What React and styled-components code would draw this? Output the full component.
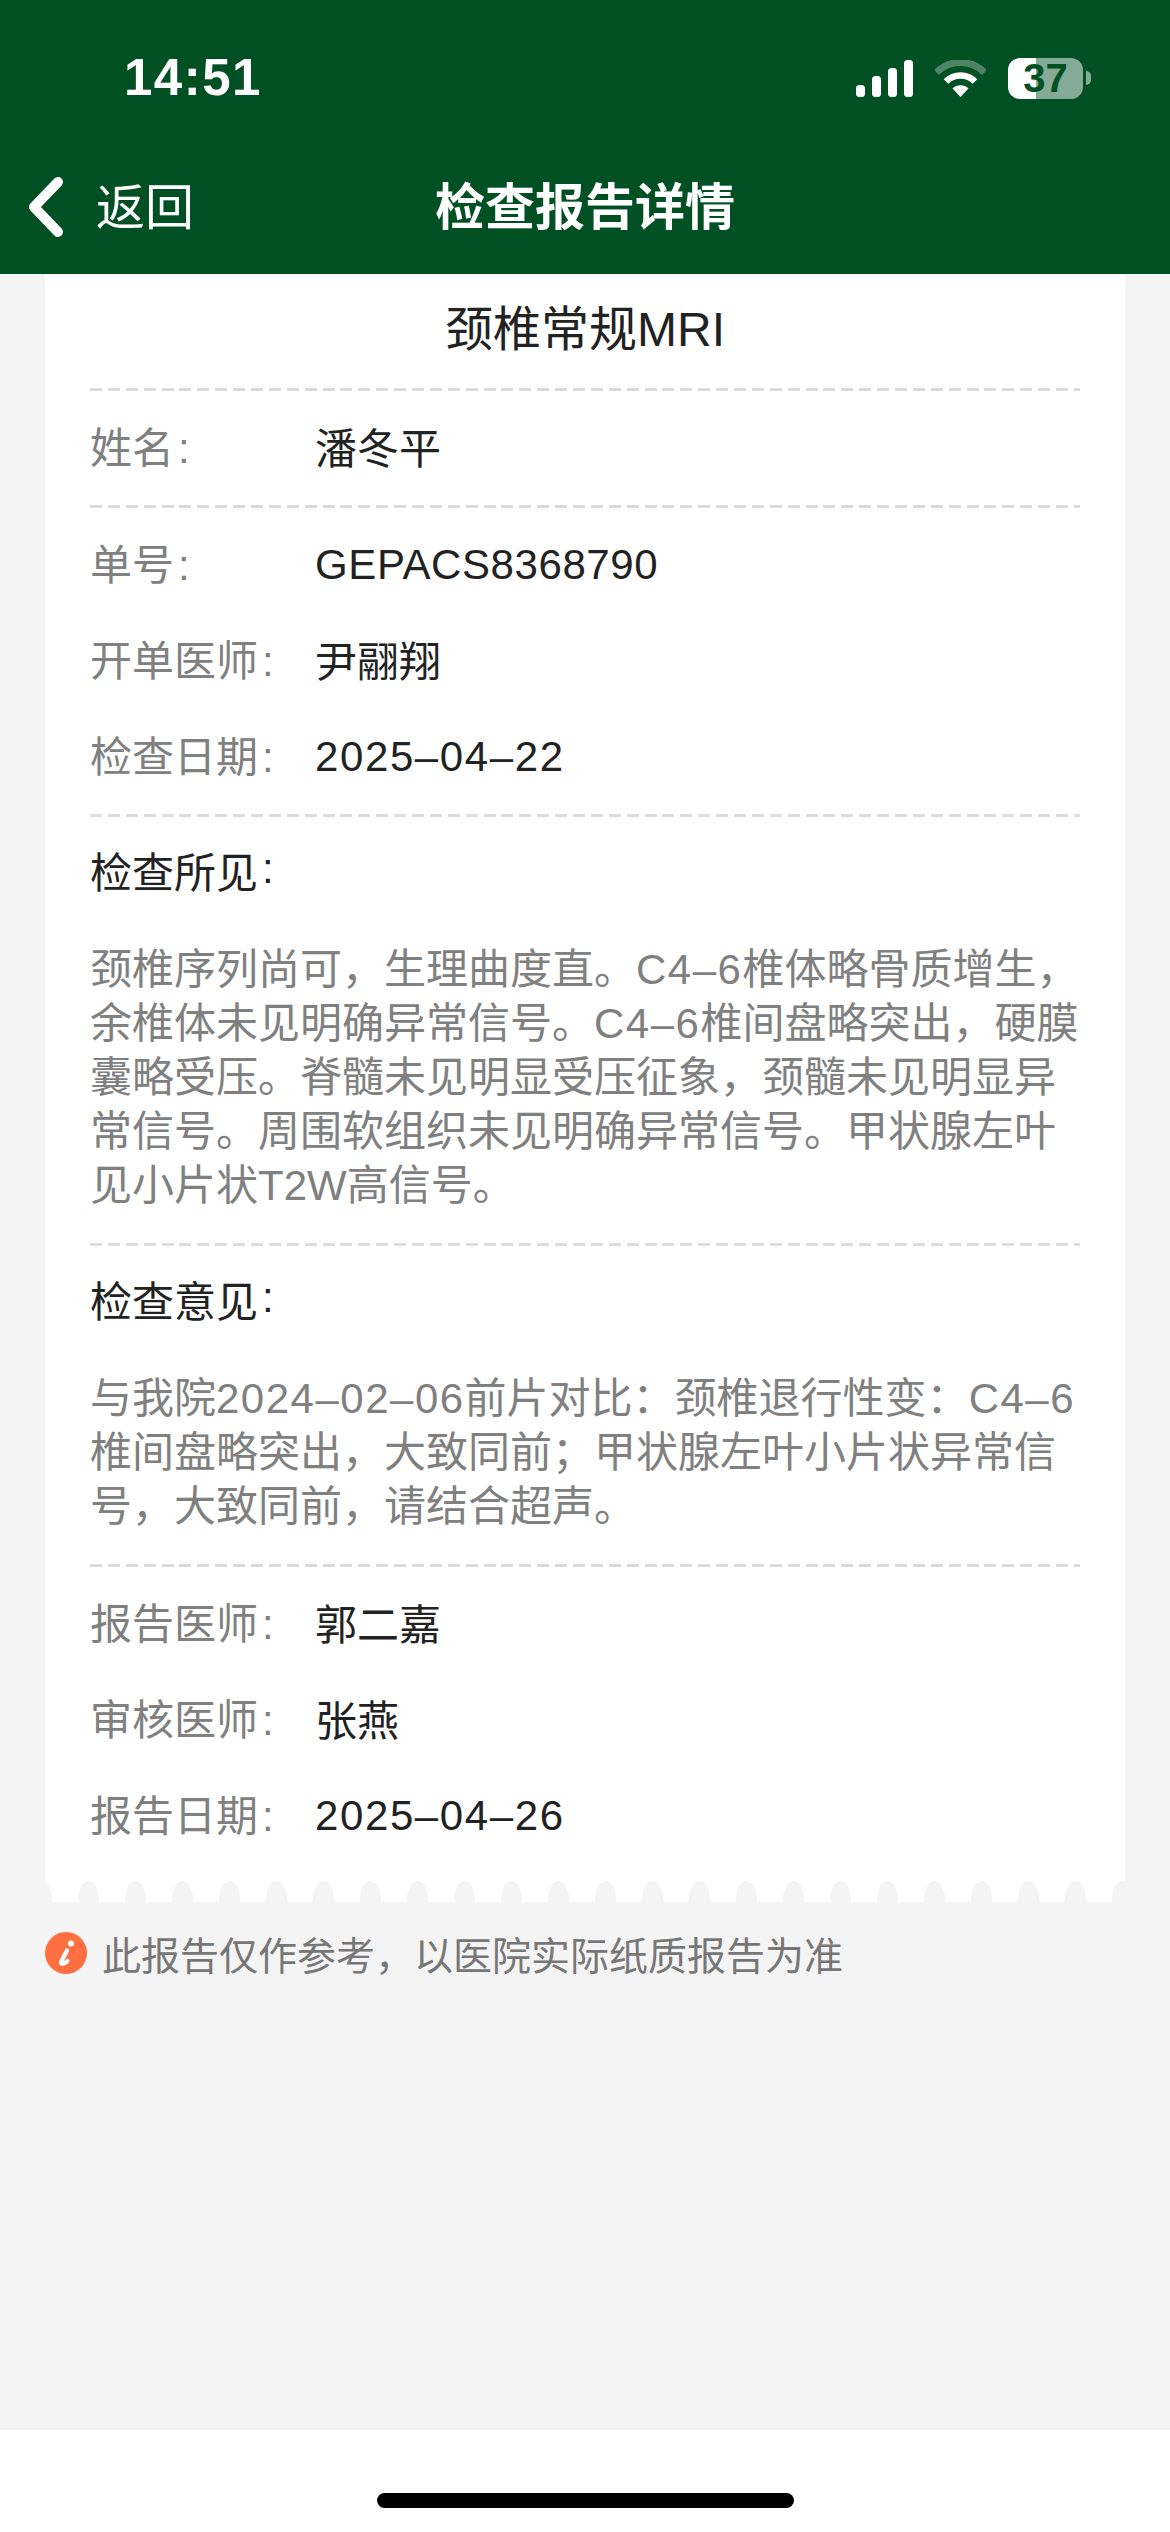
import React from "react"
import styled, { createGlobalStyle } from "styled-components"

const FONT = `"Liberation Sans", "Noto Sans CJK SC", sans-serif`

const GlobalStyle = createGlobalStyle`
	html, body {
		margin: 0;
		padding: 0;
		background: #ffffff;
		font-family: ${FONT};
	}
`

const Page = styled.div`
	width: 1170px;
	height: 2532px;
	display: flex;
	flex-direction: column;
	overflow: hidden;
`

const Header = styled.header`
	height: 274px;
	background: #015024;
	color: #ffffff;
	flex-shrink: 0;
`

const StatusBar = styled.div`
	height: 140px;
	box-sizing: border-box;
	padding: 16px 79px 0 124px;
	display: flex;
	align-items: center;
	justify-content: space-between;
`

const Time = styled.div`
	font-size: 51px;
	line-height: 56px;
	font-weight: 700;
	letter-spacing: 1.5px;
`

const StatusIcons = styled.div`
	display: flex;
	align-items: center;
`

const Signal = styled.svg`
	width: 57px;
	height: 37px;
	margin-right: 22px;
`

const Wifi = styled.svg`
	width: 51px;
	height: 37px;
	margin-right: 22px;
`

const Battery = styled.div`
	width: 75px;
	height: 41px;
	border-radius: 12px;
	background: linear-gradient(
		to right,
		#ffffff 0,
		#ffffff 28px,
		rgba(255, 255, 255, 0.52) 28px
	);
	color: #015024;
	font-size: 40px;
	line-height: 41px;
	font-weight: 700;
	text-align: center;
`

const BatteryTip = styled.div`
	width: 5px;
	height: 14px;
	margin-left: 3px;
	border-radius: 0 7px 7px 0;
	background: rgba(255, 255, 255, 0.52);
`

const Nav = styled.nav`
	height: 134px;
	display: grid;
	grid-template-columns: 1fr auto 1fr;
	align-items: center;
`

const BackLink = styled.div`
	display: flex;
	align-items: center;
	padding-left: 27px;
	font-size: 49px;
	line-height: 60px;
`

const BackIcon = styled.svg`
	width: 38px;
	height: 62px;
	margin-right: 31px;
`

const BackText = styled.span`
	padding-top: 2px;
`

const NavTitle = styled.div`
	font-size: 50px;
	line-height: 60px;
	font-weight: 700;
	padding-top: 2px;
`

const Main = styled.main`
	flex: 1;
	background: #f4f4f4;
	padding: 0 45px;
`

const Card = styled.div`
	background: #ffffff;
	padding: 0 45px;
	position: relative;
	height: 1628px;
	box-sizing: border-box;
`

const CardTitle = styled.div`
	height: 114px;
	box-sizing: border-box;
	padding-bottom: 12px;
	display: flex;
	align-items: center;
	justify-content: center;
	font-size: 48px;
	color: #222222;
`

const Section = styled.section`
	background-image: repeating-linear-gradient(
		to right,
		#dcdcdc 0,
		#dcdcdc 12px,
		transparent 12px,
		transparent 17.89px
	);
	background-size: 100% 3px;
	background-repeat: no-repeat;
	padding: ${(props) => props.$padding || "12px 0 9px"};
`

const Row = styled.div`
	display: flex;
	align-items: center;
	height: 96px;
	font-size: 42px;
`

const Label = styled.div`
	width: 225px;
	color: #808080;
	flex-shrink: 0;
	padding-bottom: 8px;
`

const Colon = styled.span`
	margin-left: 4px;
`

const Value = styled.div`
	color: #222222;
	padding-bottom: ${(props) => (props.$cjk ? "6px" : "0")};
	letter-spacing: ${(props) => props.$spacing || "0"};
`

const Heading = styled.div`
	height: 104px;
	margin-bottom: 22px;
	display: flex;
	align-items: center;
	font-size: 42px;
	color: #222222;
`

const Paragraph = styled.p`
	margin: 0;
	font-size: 42px;
	line-height: 54px;
	color: #808080;
	white-space: nowrap;
`

const Figure = styled.span`
	letter-spacing: 1.5px;
`

const Scallops = styled.div`
	position: absolute;
	left: -14px;
	right: 0;
	bottom: 0;
	height: 21px;
	display: flex;
	gap: 26px;
	overflow: hidden;
`

const Tooth = styled.div`
	width: 21px;
	height: 21px;
	flex-shrink: 0;
	background: #f4f4f4;
	border-radius: 50% 50% 0 0 / 90% 90% 0 0;
`

const Notice = styled.div`
	display: flex;
	align-items: flex-start;
	margin-top: 30px;
	font-size: 39px;
	line-height: 42px;
	color: #777777;
`

const NoticeText = styled.span`
	padding-top: 4px;
`

const NoticeIcon = styled.svg`
	width: 42px;
	height: 42px;
	margin-right: 15px;
	flex-shrink: 0;
`

const Footer = styled.footer`
	height: 102px;
	background: #ffffff;
	flex-shrink: 0;
	display: flex;
	justify-content: center;
	padding-top: 63px;
	box-sizing: border-box;
`

const HomeBar = styled.div`
	width: 417px;
	height: 15px;
	background: #000000;
	border-radius: 8px;
`

const Field = ({ label, children, cjk, spacing }) => (
	<Row>
		<Label>
			{label}
			<Colon>:</Colon>
		</Label>
		<Value $cjk={cjk} $spacing={spacing}>
			{children}
		</Value>
	</Row>
)

const App = () => {
	return (
		<Page>
			<GlobalStyle />
			<Header>
				<StatusBar>
					<Time>14:51</Time>
					<StatusIcons>
						<Signal viewBox="0 0 57 37">
							<rect x="0" y="25" width="9" height="12" rx="3.5" fill="#fff" />
							<rect x="16" y="16" width="9" height="21" rx="3.5" fill="#fff" />
							<rect x="32" y="8" width="9" height="29" rx="3.5" fill="#fff" />
							<rect x="48" y="0" width="9" height="37" rx="3.5" fill="#fff" />
						</Signal>
						<Wifi viewBox="0 0 51 37">
							<path
								d="M1.5 12.5A34 34 0 0 1 49.5 12.5"
								fill="none"
								stroke="#fff"
								strokeOpacity="0.3"
								strokeWidth="7"
							/>
							<path
								d="M11 21.5A20.5 20.5 0 0 1 40 21.5"
								fill="none"
								stroke="#fff"
								strokeWidth="6.5"
							/>
							<path d="M25.5 37L17.5 28.5A11.5 11.5 0 0 1 33.5 28.5Z" fill="#fff" />
						</Wifi>
						<Battery>37</Battery>
						<BatteryTip />
					</StatusIcons>
				</StatusBar>
				<Nav>
					<BackLink>
						<BackIcon viewBox="0 0 38 62">
							<path
								d="M31 6L7 31L31 56"
								fill="none"
								stroke="#fff"
								strokeWidth="10"
								strokeLinecap="round"
								strokeLinejoin="round"
							/>
						</BackIcon>
						<BackText>返回</BackText>
					</BackLink>
					<NavTitle>检查报告详情</NavTitle>
					<div />
				</Nav>
			</Header>
			<Main>
				<Card>
					<CardTitle>颈椎常规MRI</CardTitle>
					<Section>
						<Field label="姓名" cjk>
							潘冬平
						</Field>
					</Section>
					<Section>
						<Field label="单号" spacing="0.6px">
							GEPACS8368790
						</Field>
						<Field label="开单医师" cjk>
							尹翮翔
						</Field>
						<Field label="检查日期" spacing="1.6px">
							2025–04–22
						</Field>
					</Section>
					<Section $padding="3px 0 30px">
						<Heading>
							检查所见
							<Colon>:</Colon>
						</Heading>
						<Paragraph>
							颈椎序列尚可，生理曲度直。<Figure>C4–6</Figure>椎体略骨质增生，
							<br />
							余椎体未见明确异常信号。<Figure>C4–6</Figure>椎间盘略突出，硬膜
							<br />
							囊略受压。脊髓未见明显受压征象，颈髓未见明显异
							<br />
							常信号。周围软组织未见明确异常信号。甲状腺左叶
							<br />
							见小片状T2W高信号。
						</Paragraph>
					</Section>
					<Section $padding="3px 0 30px">
						<Heading>
							检查意见
							<Colon>:</Colon>
						</Heading>
						<Paragraph>
							与我院<Figure>2024–02–06</Figure>前片对比：颈椎退行性变：<Figure>C4–6</Figure>
							<br />
							椎间盘略突出，大致同前；甲状腺左叶小片状异常信
							<br />
							号，大致同前，请结合超声。
						</Paragraph>
					</Section>
					<Section>
						<Field label="报告医师" cjk>
							郭二嘉
						</Field>
						<Field label="审核医师" cjk>
							张燕
						</Field>
						<Field label="报告日期" spacing="1.6px">
							2025–04–26
						</Field>
					</Section>
					<Scallops>
						{Array.from({ length: 24 }).map((_, i) => (
							<Tooth key={i} />
						))}
					</Scallops>
				</Card>
				<Notice>
					<NoticeIcon viewBox="0 0 42 42">
						<circle cx="21" cy="21" r="21" fill="#ff6f3f" />
						<circle cx="26" cy="11.5" r="3" fill="#fff" />
						<path
							d="M22 18.5L16.5 29C15 32.5 18 33 22.5 29"
							fill="none"
							stroke="#fff"
							strokeWidth="4.2"
							strokeLinecap="round"
						/>
					</NoticeIcon>
					<NoticeText>此报告仅作参考，以医院实际纸质报告为准</NoticeText>
				</Notice>
			</Main>
			<Footer>
				<HomeBar />
			</Footer>
		</Page>
	)
}

export default App
